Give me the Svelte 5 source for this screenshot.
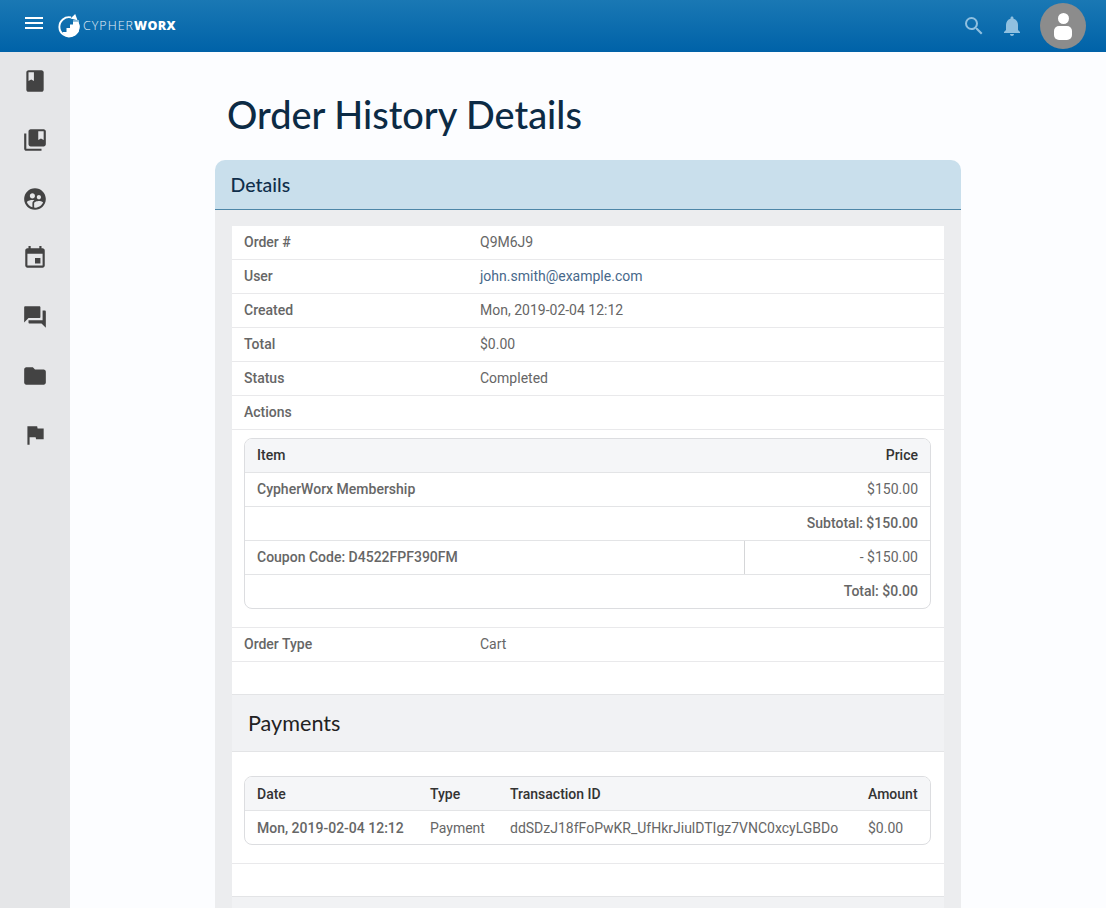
<script>
  const nav = [
    'M18 2H6c-1.1 0-2 .9-2 2v16c0 1.1.9 2 2 2h12c1.1 0 2-.9 2-2V4c0-1.1-.9-2-2-2zM6 4h5v8l-2.5-1.5L6 12V4z',
    'M4 6H2v14c0 1.1.9 2 2 2h14v-2H4V6zM20 2H8c-1.1 0-2 .9-2 2v12c0 1.1.9 2 2 2h12c1.1 0 2-.9 2-2V4c0-1.1-.9-2-2-2zm0 10l-2.5-1.5L15 12V4h5v8z',
    'M11.99 2c-5.52 0-10 4.48-10 10s4.48 10 10 10 10-4.48 10-10-4.48-10-10-10zm3.61 6.34c1.07 0 1.93.86 1.93 1.93 0 1.07-.86 1.93-1.93 1.93-1.07 0-1.93-.86-1.93-1.93-.01-1.07.86-1.93 1.93-1.93zm-6-1.58c1.3 0 2.36 1.06 2.36 2.36 0 1.3-1.06 2.36-2.36 2.36s-2.36-1.06-2.36-2.36c0-1.31 1.05-2.36 2.36-2.36zm0 9.13v3.75c-2.4-.75-4.3-2.6-5.14-4.96 1.05-1.12 3.67-1.69 5.14-1.69.53 0 1.2.08 1.9.22-1.64.87-1.9 2.02-1.9 2.68zM11.99 20c-.27 0-.53-.01-.79-.04v-4.07c0-1.42 2.94-2.13 4.4-2.13 1.07 0 2.92.39 3.84 1.15-1.17 2.97-4.06 5.09-7.45 5.09z',
    'M17 12h-5v5h5v-5zM16 1v2H8V1H6v2H5c-1.11 0-1.99.9-1.99 2L3 19c0 1.1.89 2 2 2h14c1.1 0 2-.9 2-2V5c0-1.1-.9-2-2-2h-1V1h-2zm3 18H5V8h14v11z',
    'M21 6h-2v9H6v2c0 .55.45 1 1 1h11l4 4V7c0-.55-.45-1-1-1zm-4 6V3c0-.55-.45-1-1-1H3c-.55 0-1 .45-1 1v14l4-4h10c.55 0 1-.45 1-1z',
    'M10 4H4c-1.1 0-1.99.9-1.99 2L2 18c0 1.1.9 2 2 2h16c1.1 0 2-.9 2-2V8c0-1.1-.9-2-2-2h-8l-2-2z',
    'M14.4 6L14 4H5v17h2v-7h5.6l.4 2h7V6z'
  ];
  const rows = [
    ['Order #', 'Q9M6J9'],
    ['User', 'john.smith@example.com', true],
    ['Created', 'Mon, 2019-02-04 12:12'],
    ['Total', '$0.00'],
    ['Status', 'Completed'],
    ['Actions', '']
  ];
</script>

<div class="page">
  <header class="topbar">
    <svg class="menu" viewBox="0 0 24 24"><path d="M3 18h18v-2H3v2zm0-5h18v-2H3v2zm0-7v2h18V6H3z" /></svg>
    <div class="logo">
      <svg class="mark" viewBox="0 0 23 24">
        <path fill="none" stroke="#fff" stroke-width="1.900" d="M13 3.400A9.600 9.600 0 1 0 19.300 8" />
        <path fill="#fff" d="M5 19.500V18h3.500v-4h3.500v-3.500h3V8h5.500l1.200 4-1 6-3.500 3.500-4.500 1.500-4-1z" />
        <rect x="15" y="6.200" width="6" height="1.800" fill="#9cc6e0" />
        <path fill="#fff" d="M12.500 4.600 17.200 0l2.300 6.200z" />
      </svg>
      <span class="wordmark">CYPHER<b>WORX</b></span>
    </div>
    <div class="actions">
      <svg class="tool search" viewBox="0 0 24 24"><path d="M15.500 14h-.79l-.28-.27A6.470 6.470 0 0 0 16 9.500 6.500 6.500 0 1 0 9.500 16c1.610 0 3.090-.59 4.230-1.570l.27.28v.79l5 4.990L20.490 19l-4.990-5zm-6 0C7.010 14 5 11.990 5 9.500S7.010 5 9.500 5 14 7.010 14 9.500 11.990 14 9.500 14z" /></svg>
      <svg class="tool bell" viewBox="0 0 24 24"><path d="M12 22c1.100 0 2-.9 2-2h-4c0 1.100.89 2 2 2zm6-6v-5c0-3.070-1.640-5.640-4.500-6.320V4c0-.83-.67-1.500-1.500-1.500s-1.500.67-1.500 1.500v.68C7.630 5.360 6 7.920 6 11v5l-2 2v1h16v-1l-2-2z" /></svg>
      <div class="avatar"><span class="head"></span><span class="body"></span></div>
    </div>
  </header>

  <div class="shell">
    <nav class="sidebar">
      {#each nav as d}
        <div class="nav-item"><svg viewBox="0 0 24 24"><path {d} /></svg></div>
      {/each}
    </nav>

    <main class="main">
      <h1>Order History Details</h1>
      <section class="card">
        <h2 class="card-head">Details</h2>
        <div class="card-body">
          <div class="panel">
            {#each rows as [label, value, link]}
              <div class="row">
                <span class="label">{label}</span>
                <span class="value" class:link>{value}</span>
              </div>
            {/each}

            <div class="table-row first">
              <div class="tbl">
                <div class="tr head-row split-price"><span>Item</span><span class="right">Price</span></div>
                <div class="tr split-price"><strong>CypherWorx Membership</strong><span class="right">$150.00</span></div>
                <div class="tr"><strong class="right full">Subtotal: $150.00</strong></div>
                <div class="tr coupon"><strong>Coupon Code: D4522FPF390FM</strong><span class="right">- $150.00</span></div>
                <div class="tr last"><strong class="right full">Total: $0.00</strong></div>
              </div>
            </div>

            <div class="row"><span class="label">Order Type</span><span class="value">Cart</span></div>
            <div class="spacer"></div>

            <h3 class="section-head">Payments</h3>
            <div class="table-row payments">
              <div class="tbl">
                <div class="tr pay head-row"><span>Date</span><span>Type</span><span>Transaction ID</span><span>Amount</span></div>
                <div class="tr pay last"><strong>Mon, 2019-02-04 12:12</strong><span>Payment</span><span>ddSDzJ18fFoPwKR_UfHkrJiulDTIgz7VNC0xcyLGBDo</span><span>$0.00</span></div>
              </div>
            </div>
            <div class="spacer"></div>
            <div class="section-head stub"></div>
          </div>
        </div>
      </section>
    </main>
  </div>
</div>

<style>
  :global(body) { margin: 0; }
  .page {
    width: 1106px;
    height: 908px;
    overflow: hidden;
    display: flex;
    flex-direction: column;
    font-family: Roboto, "Liberation Sans", sans-serif;
    font-size: 14px;
    color: #666;
    background: #fcfdff;
  }
  .topbar {
    flex: 0 0 52px;
    display: flex;
    align-items: center;
    background: linear-gradient(#1a78b4, #0062a8);
    padding-left: 22px;
    padding-right: 20px;
    box-sizing: border-box;
  }
  .menu { width: 24px; height: 24px; fill: #fff; margin-top: -6px; }
  .logo { display: flex; align-items: center; margin-left: 12px; margin-top: -1px; }
  .mark { width: 23px; height: 24px; display: block; }
  .wordmark {
    font-family: "Open Sans", sans-serif;
    font-size: 12.500px;
    font-weight: 300;
    letter-spacing: 1px;
    color: #e3eff7;
    margin-left: 2px;
  }
  .wordmark b { font-weight: 800; color: #fff; letter-spacing: 0.400px; }
  .actions { margin-left: auto; display: flex; align-items: center; }
  .tool { fill: #90c0e0; display: block; }
  .search { width: 24px; height: 24px; margin-right: 14px; }
  .bell { width: 24px; height: 24px; margin-right: 16px; }
  .avatar {
    width: 46px;
    height: 46px;
    border-radius: 50%;
    background: #8c8c8c;
    display: flex;
    flex-direction: column;
    align-items: center;
    padding-top: 10px;
    box-sizing: border-box;
  }
  .head { width: 11px; height: 11px; border-radius: 50%; background: #fff; }
  .body { width: 18px; height: 14px; margin-top: 2px; border-radius: 5px; background: #fff; }

  .shell { flex: 1; display: flex; min-height: 0; }
  .sidebar {
    flex: 0 0 70px;
    background: #e5e6e8;
    padding-top: 0;
  }
  .nav-item { height: 59px; display: flex; align-items: center; justify-content: center; margin-top: -1px; margin-bottom: 1px; }
  .nav-item svg { width: 26px; height: 26px; fill: #434343; display: block; }

  .main { flex: 1; padding-left: 145px; width: 746px; }
  h1 {
    margin: 0;
    height: 108px;
    box-sizing: border-box;
    padding: 40px 0 0 12px;
    font-family: Lato, sans-serif;
    font-weight: 500;
    font-size: 37.900px;
    line-height: 46px;
    color: #0c2b45;
  }
  .card { width: 746px; }
  .card-head {
    margin: 0;
    height: 50px;
    box-sizing: border-box;
    background: #c9dfec;
    border-bottom: 1px solid #4d86a8;
    border-radius: 10px 10px 0 0;
    padding-left: 15.500px;
    font-family: Lato, sans-serif;
    font-weight: 500;
    font-size: 19.500px;
    line-height: 49px;
    color: #0f2e4b;
  }
  .card-body { background: #ecedef; padding: 16px 17px 0; }
  .panel { background: #fff; width: 712px; }
  .row {
    display: flex;
    height: 34px;
    box-sizing: border-box;
    border-bottom: 1px solid #e9e9eb;
    padding-left: 12px;
    line-height: 33px;
  }
  .label { width: 236px; font-weight: 500; }
  .link { color: #47688a; }
  .table-row { padding: 8px 13px 18px 12px; border-bottom: 1px solid #e9e9eb; }
  .table-row.payments { padding-top: 24px; }
  .tbl { border: 1px solid #dcdde0; border-radius: 8px; overflow: hidden; }
  .tr {
    display: flex;
    justify-content: space-between;
    height: 34px;
    box-sizing: border-box;
    border-bottom: 1px solid #e3e4e6;
    padding: 0 12px;
    line-height: 33px;
  }
  .tr.last { border-bottom: 0; height: 33px; }
  strong { font-weight: 500; }
  .right { text-align: right; }
  .full { flex: 1; }
  .head-row { background: #f5f6f8; color: #333; font-weight: 500; }
  .coupon { padding: 0; }
  .coupon strong { flex: 1; padding-left: 12px; }
  .coupon .right { width: 186px; box-sizing: border-box; padding-right: 12px; border-left: 1px solid #d5d6d8; }
  .tr.pay { display: grid; grid-template-columns: 173px 80px 358px 1fr; line-height: 34px; }
  .spacer { height: 32px; border-bottom: 1px solid #e3e4e6; }
  .section-head {
    margin: 0;
    height: 58px;
    box-sizing: border-box;
    background: #f1f2f4;
    border-bottom: 1px solid #e3e4e6;
    padding-left: 16px;
    font-family: Lato, sans-serif;
    font-weight: 400;
    font-size: 21.600px;
    line-height: 56px;
    color: #222;
  }
  h3.section-head { height: 57px; }
</style>
